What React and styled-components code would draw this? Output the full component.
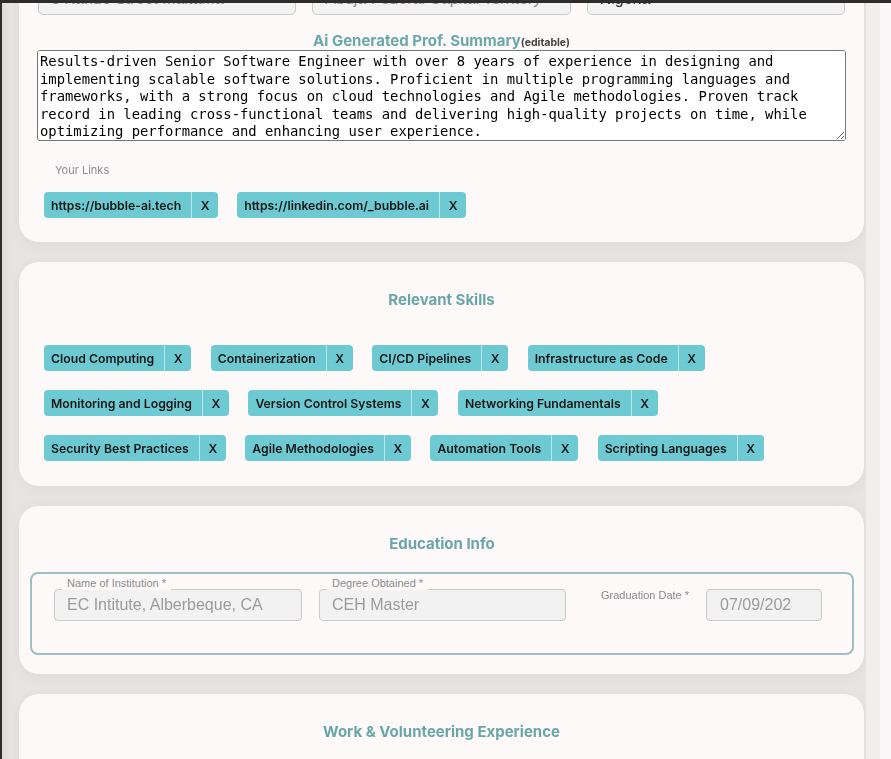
import React from "react";
import styled, { createGlobalStyle } from "styled-components";

const GlobalStyle = createGlobalStyle`
  html, body { margin: 0; padding: 0; background: #faf8f8; }
  body { font-family: Inter, "Liberation Sans", sans-serif; overflow: hidden; }
  * { box-sizing: border-box; }
`;

const TopBar = styled.div`
  position: fixed;
  top: 0;
  left: 0;
  right: 0;
  height: 3px;
  background: #2e2c2c;
  z-index: 10;
`;

const Viewport = styled.div`
  display: flex;
  height: 100vh;
  overflow: hidden;
`;

const Scroller = styled.div`
  flex: none;
  width: 866px;
  border-left: 2px solid #2e2c2c;
  padding: 0 2px 40px 17px;
  background: #e8e4e4;
  box-shadow: inset 10px 0 10px -8px rgba(0, 0, 0, 0.06);
  overflow: hidden;
`;

const Track = styled.div`
  flex: none;
  width: 14px;
  background: #f2eeee;
`;

const Stack = styled.div`
  display: flex;
  flex-direction: column;
  gap: 20px;
  margin-top: -37px;
`;

const Card = styled.section`
  background: #fdf9f9;
  border-radius: 20px;
  box-shadow: 0 2px 14px rgba(0, 0, 0, 0.05);
  padding: ${(p) => p.$pad};
  min-height: ${(p) => p.$minH || 0}px;
`;

const AddressRow = styled.div`
  display: flex;
  gap: 16px;
  padding: 0 1px;
`;

const AddressInput = styled.input`
  flex: 1;
  min-width: 0;
  height: 32px;
  border: 1px solid #cbcaca;
  border-radius: 5px;
  background: #f3f2f2;
  font: 16px "Liberation Sans", Arial, sans-serif;
  color: ${(p) => (p.$dark ? "#333" : "#8f8f8f")};
  padding: 0 12px;
`;

const SummaryTitle = styled.h3`
  margin: 17px 0 -2px;
  text-align: center;
  font-size: 15px;
  line-height: 18px;
  font-weight: 700;
  color: #6aa8aa;
`;

const Editable = styled.span`
  font-size: 10.5px;
  font-weight: 700;
  color: #444;
`;

const SummaryArea = styled.textarea`
  display: block;
  width: 100%;
  height: 91px;
  margin: 0;
  border: 1px solid #767676;
  border-radius: 3px;
  background: #fff;
  padding: 2px 20px 2px 2px;
  font-family: "DejaVu Sans Mono", "Liberation Mono", monospace;
  font-size: 13.85px;
  line-height: 17.5px;
  color: #000;
  resize: vertical;
`;

const LinksLabel = styled.div`
  margin: 22px 0 15px;
  padding-left: 18px;
  font-size: 11px;
  line-height: 14px;
  color: #8d8895;
`;

const ChipWrap = styled.div`
  display: flex;
  flex-wrap: wrap;
  column-gap: ${(p) => p.$gap}px;
  row-gap: 19px;
  padding: 0 ${(p) => p.$side}px;
`;

const Chip = styled.div`
  display: inline-flex;
  align-items: stretch;
  height: 26px;
  border-radius: 4px;
  background: #6ecad2;
  color: #161616;
  font-size: 12.25px;
  font-weight: 600;
`;

const ChipText = styled.span`
  display: flex;
  align-items: center;
  padding: 0 10px 0 7px;
  white-space: nowrap;
`;

const ChipX = styled.span`
  display: flex;
  align-items: center;
  justify-content: center;
  width: 27px;
  border-left: 1px solid rgba(255, 255, 255, 0.55);
`;

const SectionTitle = styled.h2`
  margin: 0 0 ${(p) => p.$mb || 0}px;
  text-align: center;
  font-size: 15px;
  line-height: 20px;
  font-weight: 700;
  color: #6aa6a8;
`;

const Fieldset = styled.div`
  margin-top: 18px;
  border: 2px solid #9dbfc1;
  border-radius: 8px;
  padding: 15px 22px 32px;
  display: flex;
  align-items: flex-start;
`;

const FloatField = styled.div`
  position: relative;
  width: ${(p) => p.$w}px;
  margin-right: ${(p) => p.$mr}px;
`;

const FloatLabel = styled.label`
  position: absolute;
  left: 8px;
  top: -13px;
  padding: 0 5px;
  background: #fdf9f9;
  font: 11px/14px "Liberation Sans", Arial, sans-serif;
  color: #8b8b8b;
`;

const FieldInput = styled.input`
  display: block;
  width: 100%;
  height: 32px;
  border: 1px solid #cbcaca;
  border-radius: 4px;
  background: #f3f2f2;
  font: 16px "Liberation Sans", Arial, sans-serif;
  color: #9b9b9b;
  padding: ${(p) => p.$pad || "0 12px"};
`;

const SideLabel = styled.label`
  margin: 0 17px 0 0;
  font: 11px/12px "Liberation Sans", Arial, sans-serif;
  color: #8b8590;
  white-space: nowrap;
`;

const summary =
  "Results-driven Senior Software Engineer with over 8 years of experience in designing and implementing scalable software solutions. Proficient in multiple programming languages and frameworks, with a strong focus on cloud technologies and Agile methodologies. Proven track record in leading cross-functional teams and delivering high-quality projects on time, while optimizing performance and enhancing user experience.";

const links = ["https://bubble-ai.tech", "https://linkedin.com/_bubble.ai"];

const skills = [
  "Cloud Computing",
  "Containerization",
  "CI/CD Pipelines",
  "Infrastructure as Code",
  "Monitoring and Logging",
  "Version Control Systems",
  "Networking Fundamentals",
  "Security Best Practices",
  "Agile Methodologies",
  "Automation Tools",
  "Scripting Languages",
];

function Tag({ label }) {
  return (
    <Chip>
      <ChipText>{label}</ChipText>
      <ChipX>X</ChipX>
    </Chip>
  );
}

export default function App() {
  return (
    <>
      <GlobalStyle />
      <TopBar />
      <Viewport>
        <Scroller>
          <Stack>
            <Card $pad="20px 18px 24px">
              <AddressRow>
                <AddressInput readOnly value="8 Kando Street Maitama" />
                <AddressInput readOnly value="Abuja Federal Capital Territory" />
                <AddressInput readOnly $dark value="Nigeria" />
              </AddressRow>
              <SummaryTitle>
                Ai Generated Prof. Summary<Editable>(editable)</Editable>
              </SummaryTitle>
              <SummaryArea defaultValue={summary} />
              <LinksLabel>Your Links</LinksLabel>
              <ChipWrap $gap={19} $side={7}>
                {links.map((l) => (
                  <Tag key={l} label={l} />
                ))}
              </ChipWrap>
            </Card>

            <Card $pad="28px 25px 25px">
              <SectionTitle $mb={35}>Relevant Skills</SectionTitle>
              <ChipWrap $gap={19.5} $side={0}>
                {skills.map((s) => (
                  <Tag key={s} label={s} />
                ))}
              </ChipWrap>
            </Card>

            <Card $pad="28px 10px 19px 11px">
              <SectionTitle>Education Info</SectionTitle>
              <Fieldset>
                <FloatField $w={248} $mr={17}>
                  <FloatLabel>Name of Institution *</FloatLabel>
                  <FieldInput readOnly value="EC Intitute, Alberbeque, CA" />
                </FloatField>
                <FloatField $w={247} $mr={35}>
                  <FloatLabel>Degree Obtained *</FloatLabel>
                  <FieldInput readOnly value="CEH Master" />
                </FloatField>
                <SideLabel>Graduation Date *</SideLabel>
                <FloatField $w={116} $mr={0}>
                  <FieldInput readOnly value="07/09/2024" $pad="0 29px 0 13px" />
                </FloatField>
              </Fieldset>
            </Card>

            <Card $pad="28px 25px 24px" $minH={220}>
              <SectionTitle>Work &amp; Volunteering Experience</SectionTitle>
            </Card>
          </Stack>
        </Scroller>
        <Track />
      </Viewport>
    </>
  );
}
